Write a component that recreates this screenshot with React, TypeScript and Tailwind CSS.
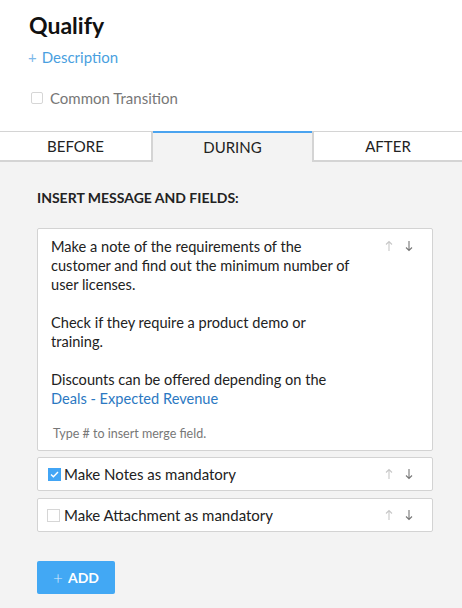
import { useState } from "react";

const ArrowUp = ({ className }: { className?: string }) => (
  <svg width="8" height="12" viewBox="0 0 8 12" className={className} fill="none" stroke="currentColor" strokeWidth="1.1">
    <path d="M4 11V1.5M1 4.5L4 1.5L7 4.5" />
  </svg>
);

const ArrowDown = ({ className }: { className?: string }) => (
  <svg width="8" height="12" viewBox="0 0 8 12" className={className} fill="none" stroke="currentColor" strokeWidth="1.1">
    <path d="M4 1V10.5M1 7.5L4 10.5L7 7.5" />
  </svg>
);

const Arrows = () => (
  <div className="flex items-center gap-[12px]">
    <ArrowUp className="text-[#c8c8c8]" />
    <ArrowDown className="text-[#777]" />
  </div>
);

const tabs = ["BEFORE", "DURING", "AFTER"];

export default function App() {
  const [active, setActive] = useState("DURING");
  const [notes, setNotes] = useState(true);
  const [attach, setAttach] = useState(false);

  return (
    <div className="w-[462px] h-[608px] bg-white flex flex-col font-['Lato',sans-serif] text-[#222] overflow-hidden">
      <div className="px-[29px] pt-[10px] pb-[24px]">
        <h1 className="text-[23px] font-bold leading-[30px] text-[#111]">Qualify</h1>
        <div className="mt-[8px] flex items-center gap-[5px] text-[15px] text-[#4a9fe0] leading-[18px] -ml-[1px]">
          <span className="text-[15px] text-[#7db9ea]">+</span>
          <span>Description</span>
        </div>
        <div className="mt-[23px] flex items-center gap-[7px] ml-[2px]">
          <span className="w-[12px] h-[12px] border border-[#d6d6d6] rounded-[2px] bg-white" />
          <span className="text-[15px] text-[#777] leading-[18px]">Common Transition</span>
        </div>
      </div>

      <div className="flex h-[31px]">
        {tabs.map((t, i) => {
          const on = t === active;
          return (
            <button
              key={t}
              onClick={() => setActive(t)}
              className={
                (i === 0 ? "w-[153px] " : i === 1 ? "w-[159px] " : "flex-1 ") +
                (on
                  ? "bg-[#f3f3f3] border-t-2 border-t-[#4aa3ef] "
                  : "bg-white border-t border-t-[#d4d4d4] border-b-2 border-b-[#d4d4d4] ") +
                (i === 0 ? "border-r-2 border-r-[#d4d4d4] " : "") +
                (i === 2 ? "border-l-2 border-l-[#d4d4d4] " : "") +
                "text-[15px] text-[#222] flex items-center justify-center"
              }
            >
              {t}
            </button>
          );
        })}
      </div>

      <div className="flex-1 bg-[#f3f3f3] px-[37px] pt-[28px] pb-[14px] pr-[29px]">
        <div className="text-[14px] font-bold text-[#222] leading-[16px]">INSERT MESSAGE AND FIELDS:</div>

        <div className="mt-[22px] bg-white border border-[#d3d3d3] rounded-[2px] h-[223px] flex flex-col pl-[13px] pr-[19px] pt-[8px] pb-[8px]">
          <div className="flex justify-between">
            <div className="text-[14.6px] leading-[19px] text-[#222] w-[310px]">
              <p>Make a note of the requirements of the customer and find out the minimum number of user licenses.</p>
              <p className="mt-[19px]">Check if they require a product demo or training.</p>
              <p className="mt-[19px]">
                Discounts can be offered depending on the <span className="text-[#2b78c2]">Deals - Expected Revenue</span>
              </p>
            </div>
            <div className="pt-[3px]">
              <Arrows />
            </div>
          </div>
          <div className="mt-auto pl-[2px] text-[12.5px] text-[#777] leading-[16px]">Type # to insert merge field.</div>
        </div>

        <div className="mt-[6px] bg-white border border-[#d3d3d3] rounded-[2px] h-[34px] flex items-center pl-[10px] pr-[19px]">
          <button
            onClick={() => setNotes(!notes)}
            className={
              "w-[13px] h-[13px] flex items-center justify-center " +
              (notes ? "bg-[#42a5f5]" : "bg-white border border-[#d6d6d6]")
            }
          >
            {notes && (
              <svg width="9" height="7" viewBox="0 0 9 7" fill="none" stroke="white" strokeWidth="1.4">
                <path d="M1 3.5L3.4 5.8L8 1" />
              </svg>
            )}
          </button>
          <span className="ml-[3px] text-[15px] text-[#222]">Make Notes as mandatory</span>
          <div className="ml-auto">
            <Arrows />
          </div>
        </div>

        <div className="mt-[7px] bg-white border border-[#d3d3d3] rounded-[2px] h-[34px] flex items-center pl-[9px] pr-[19px]">
          <button
            onClick={() => setAttach(!attach)}
            className={
              "w-[13px] h-[13px] flex items-center justify-center " +
              (attach ? "bg-[#42a5f5]" : "bg-white border border-[#d6d6d6]")
            }
          >
            {attach && (
              <svg width="9" height="7" viewBox="0 0 9 7" fill="none" stroke="white" strokeWidth="1.4">
                <path d="M1 3.5L3.4 5.8L8 1" />
              </svg>
            )}
          </button>
          <span className="ml-[4px] text-[15px] text-[#222]">Make Attachment as mandatory</span>
          <div className="ml-auto">
            <Arrows />
          </div>
        </div>

        <button className="mt-[29px] w-[78px] h-[33px] bg-[#42a8f4] rounded-[2px] text-white flex items-center justify-center gap-[5px]">
          <span className="text-[17px] font-light text-[#d8ecfd] leading-none">+</span>
          <span className="text-[14px] font-bold">ADD</span>
        </button>
      </div>
    </div>
  );
}
